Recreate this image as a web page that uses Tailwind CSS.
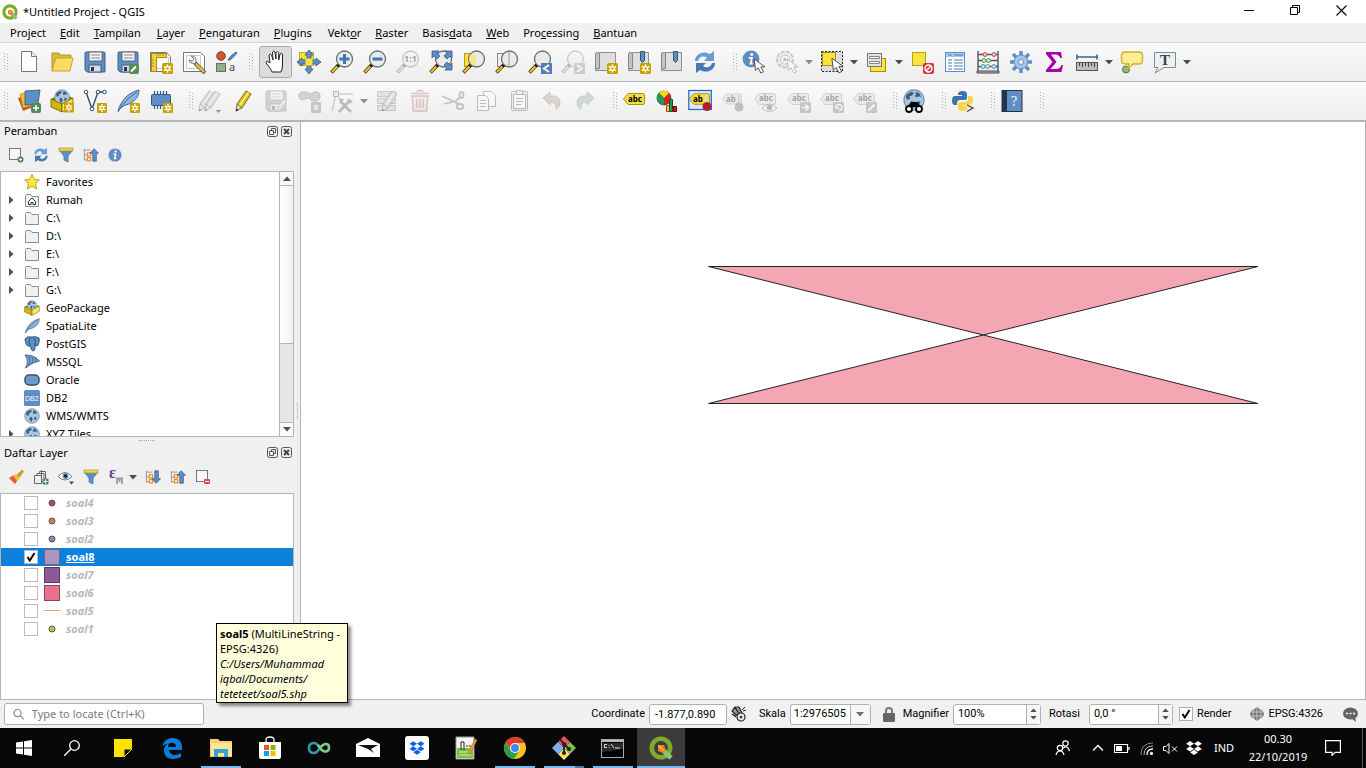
<!DOCTYPE html>
<html lang="id">
<head>
<meta charset="utf-8">
<title>*Untitled Project - QGIS</title>
<script src="https://cdn.jsdelivr.net/npm/@tailwindcss/browser@4"></script>
</head>
<body class="h-screen flex flex-col overflow-hidden bg-[#f0f0f0] text-black font-['Noto_Sans','Open_Sans',sans-serif] text-[12px] leading-[18px]">

<svg class="hidden" aria-hidden="true">
  <defs>
    <symbol id="grip" viewBox="0 0 4 18"><path d="M.5 0v18M3.500 1v17" stroke="#b0b0b0" stroke-width="1" stroke-dasharray="1 2" shape-rendering="crispEdges"/></symbol>
    <symbol id="caret" viewBox="0 0 8 5"><path d="M0 0h8L4 4.500z" fill="#4d4d4d"/></symbol>
    <symbol id="plusgold" viewBox="0 0 11 11"><rect width="11" height="11" rx="1.500" fill="#c9a000"/><path d="M5.500 1.200v8.600M1.800 3.300l7.400 4.400M9.200 3.300L1.800 7.700" stroke="#fff" stroke-width="1.400"/><circle cx="5.500" cy="5.500" r="2.500" fill="#fff"/><circle cx="5.500" cy="5.500" r="1.200" fill="#c9a000"/></symbol>
    <symbol id="lens" viewBox="0 0 24 24"><path d="M1.500 22.500l7-7.500" stroke="#3a3020" stroke-width="3.400"/><path d="M2 22l6-6.300" stroke="#f5c518" stroke-width="2"/><path d="M7.500 16.500l2-2" stroke="#111" stroke-width="3"/><circle cx="14.500" cy="9" r="8" fill="#e9ecec" stroke="#6e6e6e" stroke-width="1.300"/></symbol>
    <symbol id="arrow" viewBox="0 0 14 18"><path d="M1 1l1.500 13 3-3 3 6 3-1.500-3-5.500h4.500z" fill="#fff" stroke="#444" stroke-width="1"/></symbol>
    <symbol id="globe" viewBox="0 0 24 24"><circle cx="12" cy="12" r="11" fill="#a9c6e0" stroke="#7290ae" stroke-width="1.200"/><path d="M4 6l5-3 3 1-2 3-3 1 1 2-3 2-2-3zM14 3l4 2 2 4-3-1-2 1-2-1 1-2zM9 13l3 1 1 3-2 4-3-4zM16 13l3 1-1 4-3-1z" fill="#3d5b7a"/></symbol>
    <symbol id="refresh" viewBox="0 0 24 24"><path d="M2 11C2 4 10 0 17 4l4-3v10H11l3-3C10 5 6 7 5 11z" fill="#6a9bd2"/><path d="M22 13c0 7-8 11-15 7l-4 3V13h10l-3 3c4 3 8 1 9-3z" fill="#4478b8"/></symbol>
    <symbol id="funnel" viewBox="0 0 16 16"><path d="M1 3h14l-5 6v6l-4-2V9z" fill="#5f8fc4" stroke="#4a74a3" stroke-width=".8"/><rect x="1" y="1" width="14" height="3" fill="#e8d84a" stroke="#9e8d20" stroke-width=".6"/></symbol>
    <symbol id="folder" viewBox="0 0 14 13"><path d="M.5 2.500v-1q0-1 1-1h4l1.500 2h6.500v10H.5z" fill="#f0f0f0" stroke="#8c8c8c"/></symbol>
    <symbol id="tri" viewBox="0 0 5 8"><path d="M0 0l4.500 4L0 8z" fill="#4f4f4f"/></symbol>
    <symbol id="restore" viewBox="0 0 11 11"><rect x=".5" y=".5" width="10" height="10" rx="2" fill="none" stroke="#555"/><path d="M4.500 4.500v-2h4v4h-2M2.500 4.500h4v4h-4z" fill="none" stroke="#555"/></symbol>
    <symbol id="closebox" viewBox="0 0 11 11"><rect x=".5" y=".5" width="10" height="10" rx="2" fill="none" stroke="#555"/><path d="M3 3l5 5M8 3l-5 5" stroke="#444" stroke-width="2"/></symbol>
    <symbol id="info" viewBox="0 0 16 16"><circle cx="8" cy="8" r="7.500" fill="#5f8dc1"/><circle cx="8.700" cy="4" r="1.300" fill="#fff"/><path d="M6 7h2.800L7.600 12h1.900" fill="none" stroke="#fff" stroke-width="1.600"/></symbol>
    <symbol id="floppy" viewBox="0 0 24 24"><path d="M2 3q0-1 1-1h18q1 0 1 1v19H4l-2-2z" fill="#5f8ec4" stroke="#3f618c"/><rect x="6" y="2" width="13" height="9" fill="#f4f4f4" stroke="#667"/><path d="M8 5h9M8 8h9" stroke="#8a8a8a"/><rect x="6" y="15" width="12" height="7" fill="#d8dde3" stroke="#3f618c"/><rect x="8" y="17" width="3" height="4" fill="#333"/></symbol>
    <symbol id="book" viewBox="0 0 24 24"><path d="M5.500 2.500H21.500v18h-18V4z" fill="#dedede" stroke="#8f8f8f"/><path d="M5.500 18.500H3q-1.500 0-1.500 1.500t2 .5M1.500 20V4q0-1.500 2-1.500t2 1.500v14.500" fill="#c4c4c4" stroke="#858585"/></symbol>
    <symbol id="tag" viewBox="0 0 22 12"><path d="M5 .5h15q1.500 0 1.500 1.500v8q0 1.500-1.500 1.500H5L.5 6z" fill="#f2de3c" stroke="#a8951c"/></symbol>
    <symbol id="tree" viewBox="0 0 18 16"><path d="M1.500 1v13M1.500 2.500h7M1.500 8h3M1.500 13.500h3" stroke="#8c8c8c" fill="none"/><rect x="5" y="5.500" width="3.500" height="3.500" fill="#fff" stroke="#f28a1c" stroke-width="1.400"/><rect x="5" y="11" width="3.500" height="3.500" fill="#fff" stroke="#f28a1c" stroke-width="1.400"/></symbol>
    <symbol id="q" viewBox="0 0 24 24"><circle cx="12" cy="12" r="9.200" fill="none" stroke="#7eaa2c" stroke-width="4.600"/><path d="M14 14l8 8" stroke="#8cc27a" stroke-width="4.600"/><path d="M9 9h6l2 5-3 3-5-2z" fill="#ee7f2a"/><path d="M9.500 9.500l5 5" stroke="#f9c23c" stroke-width="1.500"/></symbol>
    <symbol id="dropbox" viewBox="0 0 18 16"><path d="M4.500 0L9 3 4.500 6 0 3zM13.500 0L18 3l-4.500 3L9 3zM4.500 6L9 9l-4.500 3L0 9zM13.500 6L18 9l-4.500 3L9 9zM9 10l4.500 3L9 16l-4.500-3z"/></symbol>
    <symbol id="tick" viewBox="0 0 10 10"><path d="M1.500 5l2.300 3.500L8.500 1" fill="none" stroke="#000" stroke-width="1.900"/></symbol>
    <symbol id="quill" viewBox="0 0 24 24"><path d="M2 22C5 12 11 4 23 1c0 7-5 13-13 15l-3 1z" fill="#8db4dc" stroke="#45678c"/><path d="M2 23C7 14 13 8 21 3" fill="none" stroke="#45678c"/></symbol>
    <symbol id="box" viewBox="0 0 24 24"><path d="M1 10l11 5v8L1 18z" fill="#d8b400" stroke="#6d5c00" stroke-width=".8"/><path d="M23 9l-11 6v8l11-6z" fill="#f7ea55" stroke="#6d5c00" stroke-width=".8"/></symbol>
    <symbol id="pencil" viewBox="0 0 24 24"><path d="M6 15L15 2l5 3-9 14z" fill="#e3c21f" stroke="#7d6b12"/><path d="M5 22l1-7 5 4z" fill="#e7d7b5" stroke="#555" stroke-width=".8"/><path d="M5 22.500l.4-3 2 1.500z" fill="#222"/><path d="M8.500 16.500L17.500 3.500" stroke="#fff07a" stroke-width="1.500"/></symbol>
  </defs>
</svg>

<header class="flex h-[23px] shrink-0 items-center bg-white pr-[2px] pl-[2px]">
  <svg class="size-4"><use href="#q"/></svg>
  <h1 class="ml-[5px] flex-1 text-[11px]">*Untitled Project - QGIS</h1>
  <button aria-label="Minimize" class="flex h-[21px] w-[46px] items-center justify-center self-start"><svg class="size-[11px]"><path d="M0 5.500h10" stroke="#000"/></svg></button>
  <button aria-label="Restore" class="flex h-[21px] w-[46px] items-center justify-center self-start"><svg class="size-[11px]" fill="none" stroke="#000"><path d="M2.500 2.500v-2h7v7h-2M.5 2.500h7v7h-7z"/></svg></button>
  <button aria-label="Close" class="flex h-[21px] w-[46px] items-center justify-center self-start"><svg class="size-[11px]"><path d="M.5.5l10 10M10.500.5l-10 10" stroke="#000" stroke-width="1.100"/></svg></button>
</header>

<nav class="flex h-5 shrink-0 items-center gap-[14px] border-b border-[#d4d4d4] pl-[10px] text-[11px]">
  <button>Pro<u>j</u>ect</button><button><u>E</u>dit</button><button><u>T</u>ampilan</button><button class="ml-[2px]"><u>L</u>ayer</button><button><u>P</u>engaturan</button><button><u>P</u>lugins</button><button class="ml-[2px]">Vekt<u>o</u>r</button><button><u>R</u>aster</button><button>Basis<u>d</u>ata</button><button><u>W</u>eb</button><button>Pro<u>c</u>essing</button><button><u>B</u>antuan</button>
</nav>

<div role="toolbar" class="flex h-[39px] shrink-0 items-center border-b border-[#b5b5b5] bg-linear-to-b from-[#fafafa] to-[#ededed] [&>button]:flex [&>button]:h-8 [&>button]:w-[33px] [&>button]:shrink-0 [&>button]:items-center [&>button]:justify-center [&>button>svg]:size-6">
  <span class="flex w-3 justify-center"><svg class="h-[18px] w-1"><use href="#grip"/></svg></span>
  <button aria-label="New"><svg viewBox="0 0 24 24"><path d="M4.500 1.500h10l5 5v15h-15z" fill="#fff" stroke="#777"/><path d="M14.500 1.500v5h5" fill="#eee" stroke="#777"/></svg></button>
  <button aria-label="Open"><svg viewBox="0 0 24 24"><path d="M2 21V3h7l1 2h11v4" fill="#d9b83c" stroke="#b99623"/><path d="M2 21L6 8h17l-3 13z" fill="#fbdc63" stroke="#c9a52d"/></svg></button>
  <button aria-label="Save"><svg><use href="#floppy"/></svg></button>
  <button aria-label="Save as"><svg viewBox="0 0 24 24"><use href="#floppy"/><rect x="13" y="14" width="10" height="10" rx="2" fill="#5b8a52"/><path d="M15 21.500l5-5" stroke="#fff" stroke-width="2"/></svg></button>
  <button aria-label="New layout"><svg viewBox="0 0 24 24"><path d="M1.500 2.500h16l4 4v15h-20z" fill="#fff" stroke="#777"/><path d="M6.500 7.500h13v11h-13z" fill="none" stroke="#b9cfe8"/><path d="M2.500 3.500h15v4h-10v14h-5z" fill="#f3d43f" stroke="#a58a15"/><path d="M8 4v2M11 4v2M14 4v2M3 10h2M3 13h2M3 16h2" stroke="#a58a15"/><use href="#plusgold" x="13" y="13" width="11" height="11"/></svg></button>
  <button aria-label="Layout manager"><svg viewBox="0 0 24 24"><path d="M1.500 2.500h17l4 4v15h-21z" fill="#fff" stroke="#777"/><path d="M4.500 5.500h14v13h-14z" fill="none" stroke="#b9cfe8"/><path d="M13 13l10 10" stroke="#7b6a27" stroke-width="4"/><path d="M14 14l8 8" stroke="#e4c85a" stroke-width="2"/><path d="M9 6q5 0 5 4 0 2-1 4l-3-1q-3 0-3-3l3 1 2-2z" fill="#eee" stroke="#777"/></svg></button>
  <button aria-label="Style manager"><svg viewBox="0 0 24 24"><circle cx="6" cy="6" r="4.300" fill="#cb5a33" stroke="#8d3a1c"/><path d="M13 10q1-3 8-8l1 1q-4 5-7 7z" fill="#5f8ec4" stroke="#41658f"/><rect x="1.500" y="13.500" width="9" height="8" fill="#8fb08c" stroke="#56795a"/><text x="14" y="21" font-size="11" fill="#444">a</text></svg></button>

  <span class="flex w-4 justify-center"><svg class="h-[18px] w-1"><use href="#grip"/></svg></span>
  <button aria-label="Pan" aria-pressed="true" class="rounded-[3px] border border-[#a9a9a9] bg-[#dcdcdc]"><svg viewBox="0 0 24 24"><path d="M8 22C7 18 2 14 2 12q1-2 4 1L5 5q1-2 2.500 0L9 10 8.500 2q1.200-2 2.500 0l1 7V2.500q1.500-2 2.700 0V10l1.300-6q1.700-1.500 2.500 0v12q0 3-1.500 6z" fill="#fff" stroke="#222"/></svg></button>
  <button aria-label="Pan to selection"><svg viewBox="0 0 24 24"><rect x="2.500" y="2.500" width="14" height="13" fill="#fbe03a" stroke="#c3a81c"/><path d="M12 0l4 5h-2v5h5V8l5 4-5 4v-2h-5v5h2l-4 5-4-5h2v-5H5v2l-5-4 5-4v2h5V5H8z" fill="#5f8ec4" stroke="#33557e" stroke-width=".8"/><rect x="8.500" y="8.500" width="7" height="7" fill="#fbe03a"/></svg></button>
  <button aria-label="Zoom in"><svg viewBox="0 0 24 24"><use href="#lens"/><path d="M14.500 4v10M9.500 9h10" stroke="#4274ad" stroke-width="3"/></svg></button>
  <button aria-label="Zoom out"><svg viewBox="0 0 24 24"><use href="#lens"/><path d="M9.500 9h10" stroke="#4274ad" stroke-width="3"/></svg></button>
  <button aria-label="Zoom native" class="opacity-35 grayscale"><svg viewBox="0 0 24 24"><use href="#lens"/><text x="8" y="12" font-size="9" font-weight="700">1:1</text></svg></button>
  <button aria-label="Zoom full"><svg viewBox="0 0 24 24"><use href="#lens"/><path d="M3 1h7L8 3l3 3-3 3-3-3-2 2zM23 1h-7l2 2-3 3 3 3 3-3 2 2zM23 20h-7l2-2-3-3 3-3 3 3 2-2z" fill="#5f8ec4" stroke="#33557e" stroke-width=".8"/></svg></button>
  <button aria-label="Zoom to selection"><svg viewBox="0 0 24 24"><rect x="2.500" y="3.500" width="12" height="13" fill="#fbe03a" stroke="#b59b17"/><use href="#lens"/><path d="M8 5h6v11q-6-1-7-7z" fill="#f3e88a"/></svg></button>
  <button aria-label="Zoom to layer"><svg viewBox="0 0 24 24"><rect x="2.500" y="3.500" width="12" height="13" fill="#eee" stroke="#888"/><use href="#lens"/><path d="M14 2v14" stroke="#999"/></svg></button>
  <button aria-label="Zoom last"><svg viewBox="0 0 24 24"><use href="#lens"/><rect x="13" y="13" width="11" height="11" fill="#4f7fb8"/><path d="M21 15l-5 3.500 5 3.500" fill="none" stroke="#fff" stroke-width="2"/></svg></button>
  <button aria-label="Zoom next" class="opacity-30 grayscale"><svg viewBox="0 0 24 24"><use href="#lens"/><rect x="13" y="13" width="11" height="11" fill="#777"/><path d="M16 15l5 3.500-5 3.500" fill="none" stroke="#fff" stroke-width="2"/></svg></button>
  <button aria-label="New map view"><svg viewBox="0 0 24 24"><use href="#book"/><use href="#plusgold" x="13" y="13" width="11" height="11"/></svg></button>
  <button aria-label="New bookmark"><svg viewBox="0 0 24 24"><use href="#book"/><path d="M13.500 1.500h4v9l-2 2-2-2z" fill="#5f8ec4" stroke="#33557e"/><use href="#plusgold" x="13" y="13" width="11" height="11"/></svg></button>
  <button aria-label="Show bookmarks"><svg viewBox="0 0 24 24"><use href="#book"/><path d="M13.500 1.500h4v9l-2 2-2-2z" fill="#5f8ec4" stroke="#33557e"/></svg></button>
  <button aria-label="Refresh"><svg viewBox="0 0 24 24"><use href="#refresh"/></svg></button>

  <span class="flex w-4 justify-end"><svg class="h-[18px] w-1"><use href="#grip"/></svg></span>
  <button aria-label="Identify"><svg viewBox="0 0 24 24"><use href="#info" width="18" height="18"/><use href="#arrow" x="11" y="8" width="13" height="16"/></svg></button>
  <button aria-label="Run action" class="opacity-35 grayscale"><svg viewBox="0 0 24 24"><circle cx="10" cy="9.500" r="8" fill="#ddd" stroke="#777" stroke-width="2" stroke-dasharray="4 1.500"/><circle cx="10" cy="9.500" r="4.500" fill="#fff" stroke="#666"/><path d="M8.500 7l4 2.500-4 2.500z" fill="#555"/><use href="#arrow" x="11" y="8" width="13" height="16"/></svg></button>
  <span class="flex w-3 justify-center opacity-60"><svg class="h-[5px] w-2"><use href="#caret"/></svg></span>
  <button aria-label="Select features"><svg viewBox="0 0 24 24"><rect x="1.500" y="1.500" width="21" height="20" fill="#ddd" stroke="#222" stroke-dasharray="2 1.500"/><rect x="2.500" y="2.500" width="13" height="13" fill="#fbe33f" stroke="#a78f12"/><use href="#arrow" x="11" y="7" width="13" height="17"/></svg></button>
  <span class="flex w-3 justify-center"><svg class="h-[5px] w-2"><use href="#caret"/></svg></span>
  <button aria-label="Select by value"><svg viewBox="0 0 24 24"><rect x="5.500" y="8.500" width="15" height="13" fill="#fbe33f" stroke="#a78f12"/><rect x="2.500" y="3.500" width="14" height="13" fill="#dde4ea" stroke="#777"/><path d="M4.500 6.500h10v2h-10zM4.500 11.500h10v2h-10z" fill="#fff" stroke="#888"/></svg></button>
  <span class="flex w-3 justify-center"><svg class="h-[5px] w-2"><use href="#caret"/></svg></span>
  <button aria-label="Deselect"><svg viewBox="0 0 24 24"><rect x="2.500" y="2.500" width="13" height="13" fill="#fbe33f" stroke="#b9a01a"/><rect x="13" y="13" width="11" height="11" rx="2" fill="#d8353c"/><circle cx="18.500" cy="18.500" r="3.500" fill="none" stroke="#fff" stroke-width="1.400"/><path d="M16 21l5-5" stroke="#fff" stroke-width="1.400"/></svg></button>
  <button aria-label="Attribute table"><svg viewBox="0 0 24 24"><rect x="2.500" y="2.500" width="19" height="19" fill="#fff" stroke="#5f8ec4"/><path d="M3 3h18v4H3z" fill="#a9cbe8"/><path d="M5 5h4M11 5h9M5 10h4M11 10h9M5 13h4M11 13h9M5 16h4M11 16h9M5 19h4M11 19h9" stroke="#4c7db3"/></svg></button>
  <button aria-label="Field calculator"><svg viewBox="0 0 24 24"><path d="M2 1v21M22 1v21M2 4.500h20M2 10.500h20M2 16.500h20" stroke="#555" stroke-width="1.400"/><path d="M1 21h22v2H1z" fill="#bbb" stroke="#444"/><g fill="#f4c4c4" stroke="#c8464a"><circle cx="9" cy="4.500" r="2"/><circle cx="18" cy="4.500" r="2"/></g><g fill="#cfe8cf" stroke="#4f9a52"><circle cx="8" cy="10.500" r="2"/><circle cx="12.500" cy="10.500" r="2"/></g><g fill="#cfe2f0" stroke="#5590b8"><circle cx="7" cy="16.500" r="2"/><circle cx="11.500" cy="16.500" r="2"/><circle cx="18" cy="16.500" r="2"/></g></svg></button>
  <button aria-label="Processing toolbox"><svg viewBox="0 0 24 24"><path d="M12 1v22M1 12h22M4 4l16 16M20 4L4 20" stroke="#5f8ec4" stroke-width="3.500"/><circle cx="12" cy="12" r="7" fill="#a3c3e8" stroke="#5f8ec4"/><circle cx="12" cy="12" r="2.500" fill="#f4f4f4" stroke="#5f8ec4"/></svg></button>
  <button aria-label="Statistical summary"><svg viewBox="0 0 24 24"><path d="M4 2h15l1 6h-1.500q-1-3-4-3.500H9L14.500 12 8.500 19H15q3.500-.5 4.500-4H21l-1.500 7H4v-2l6.500-8L4 4z" fill="#a800a8"/></svg></button>
  <button aria-label="Measure"><svg viewBox="0 0 24 24"><path d="M2 7h20M2 4.500v5M22 4.500v5" stroke="#41658f" stroke-width="1.600"/><rect x="1.500" y="12.500" width="21" height="8" fill="#bdbdbd" stroke="#555"/><path d="M4.500 13v3M7.500 13v4M10.500 13v3M13.500 13v4M16.500 13v3M19.500 13v4" stroke="#444"/></svg></button>
  <span class="flex w-3 justify-center"><svg class="h-[5px] w-2"><use href="#caret"/></svg></span>
  <button aria-label="Map tips"><svg viewBox="0 0 24 24"><circle cx="6" cy="19.500" r="3.500" fill="#8cb78a" stroke="#4c7a4d"/><path d="M5 2h14q3.500 0 3.500 3.500v5q0 3.500-3.500 3.500h-6l-6 5.500L9 14H5q-3.500 0-3.500-3.500v-5Q1.500 2 5 2z" fill="#fbee94" stroke="#cdae1f" stroke-width="1.300"/></svg></button>
  <button aria-label="Text annotation"><svg viewBox="0 0 24 24"><path d="M1.500 2.500h21v15H11l-9 5.500 3-5.500H1.500z" fill="#e9f0f6" stroke="#888"/><text x="7" y="15" font-size="15" font-weight="700" font-family="Liberation Serif" fill="#444">T</text></svg></button>
  <span class="flex w-3 justify-center"><svg class="h-[5px] w-2"><use href="#caret"/></svg></span>
</div>

<div role="toolbar" class="flex h-[39px] shrink-0 items-center border-b border-[#b5b5b5] bg-linear-to-b from-[#fafafa] to-[#ededed] [&>button]:flex [&>button]:h-8 [&>button]:w-[33px] [&>button]:shrink-0 [&>button]:items-center [&>button]:justify-center [&>button>svg]:size-6">
  <span class="flex w-3 justify-center"><svg class="h-[18px] w-1"><use href="#grip"/></svg></span>
  <button aria-label="Data source manager"><svg viewBox="0 0 24 24"><path d="M1 9l12-4 3 13-10 4z" fill="#c9562c"/><path d="M3 5l12-3 2 14-11 3z" fill="#edbf2f" stroke="#a8801c" stroke-width=".6"/><path d="M8 2l15-1-2 14-13 1z" fill="#5f8ec4" stroke="#33557e" stroke-width=".8"/><rect x="14" y="14" width="10" height="10" rx="2" fill="#4f8a58"/><path d="M19 16v6M16 19h6" stroke="#fff" stroke-width="1.500"/></svg></button>
  <button aria-label="New GeoPackage"><svg viewBox="0 0 24 24"><path d="M1 10l11-6 11 5-11 6z" fill="#8a7400"/><use href="#globe" x="4" y="0" width="16" height="16"/><use href="#box"/><use href="#plusgold" x="14" y="13" width="10" height="11"/></svg></button>
  <button aria-label="New shapefile"><svg viewBox="0 0 24 24"><path d="M3 3l6 17 6-17h6" fill="none" stroke="#33506e" stroke-width="1.400"/><g fill="#fff" stroke="#33506e"><circle cx="3" cy="3" r="1.800"/><circle cx="9" cy="20" r="1.800"/><circle cx="15" cy="3" r="1.800"/><circle cx="21.500" cy="3" r="1.800"/></g><use href="#plusgold" x="14" y="14" width="10" height="10"/></svg></button>
  <button aria-label="New SpatiaLite"><svg viewBox="0 0 24 24"><use href="#quill"/><use href="#plusgold" x="14" y="14" width="10" height="10"/></svg></button>
  <button aria-label="New scratch layer"><svg viewBox="0 0 24 24"><path d="M5.500 2v18M8.500 2v18M11.500 2v18M14.500 2v18M17.500 2v18" stroke="#33557e" stroke-width="1.200"/><rect x="2.500" y="5.500" width="19" height="11" rx="1" fill="#5f8ec4" stroke="#33557e"/><use href="#plusgold" x="14" y="14" width="10" height="10"/></svg></button>

  <span class="flex w-4 justify-end"><svg class="h-[18px] w-1"><use href="#grip"/></svg></span>
  <button aria-label="Current edits" class="opacity-40 grayscale"><svg viewBox="0 0 24 24"><use href="#pencil" x="-4" width="24" height="24"/><use href="#pencil" x="2" width="24" height="24"/><path d="M18 21h5l-2.500 3z"/></svg></button>
  <button aria-label="Toggle editing"><svg viewBox="0 0 24 24"><use href="#pencil"/></svg></button>
  <button aria-label="Save edits" class="opacity-30 grayscale"><svg viewBox="0 0 24 24"><use href="#floppy"/><use href="#pencil" x="10" y="9" width="15" height="15"/></svg></button>
  <button aria-label="Add feature" class="opacity-35 grayscale"><svg viewBox="0 0 24 24"><path d="M2 8q-1-4 3-5 3-1 6 1t6-1q6-1 6 4t-5 5-5-2-5 0-6-2z" fill="#999" stroke="#555"/><rect x="14" y="13" width="10" height="11" rx="1" fill="#777"/><path d="M19 15v7M16 16.500l6 4M22 16.500l-6 4" stroke="#fff"/></svg></button>
  <button aria-label="Vertex tool" class="opacity-35 grayscale"><svg viewBox="0 0 24 24"><path d="M2 22L6 5h17" fill="none" stroke="#555"/><rect x="3.500" y="2.500" width="5" height="5" fill="#ddd" stroke="#444"/><path d="M9 23L20 11M10 12l11 11" stroke="#555" stroke-width="2.600"/><path d="M8 9l6 1-3 5zM17 9l6 3-3 3z" fill="#555"/></svg></button>
  <span class="flex w-3 justify-center opacity-60"><svg class="h-[5px] w-2"><use href="#caret"/></svg></span>
  <button aria-label="Modify attributes" class="opacity-40"><svg viewBox="0 0 24 24"><path d="M2.500 2.500h18v5h-18zM2.500 9.500h18v5h-18zM2.500 16.500h18v5h-18z" fill="#ccccaa" stroke="#888"/><use href="#pencil" x="2" width="24" height="24" class="grayscale"/></svg></button>
  <button aria-label="Delete selected" class="opacity-35"><svg viewBox="0 0 24 24"><path d="M4 7h16l-1.500 15h-13z" fill="#e8d8d8" stroke="#97686a" stroke-width="1.400"/><path d="M3 4.500h18M9 3q0-1.500 3-1.500t3 1.500M8.500 10l.5 9M12 10v9M15.500 10l-.5 9" fill="none" stroke="#97686a" stroke-width="1.500"/></svg></button>
  <button aria-label="Cut" class="opacity-35"><svg viewBox="0 0 24 24" fill="none" stroke="#666" stroke-width="1.800"><path d="M1 7l17 8M3 15l12-3 4-4"/><ellipse cx="20.500" cy="6" rx="2" ry="3"/><ellipse cx="19" cy="17.500" rx="3.200" ry="2.500"/></svg></button>
  <button aria-label="Copy" class="opacity-35"><svg viewBox="0 0 24 24" fill="#fff" stroke="#555"><path d="M9.500 2.500h8l4 4v11h-12z"/><path d="M3.500 6.500h8l3 3v12h-11zM6 11.500h6M6 14.500h6M6 17.500h6"/></svg></button>
  <button aria-label="Paste" class="opacity-35"><svg viewBox="0 0 24 24" fill="#ddd" stroke="#555"><rect x="4.500" y="2.500" width="16" height="19" rx="1"/><path d="M6.500 5.500h12v14h-12z" fill="#fff"/><path d="M9.500 1.500h6v4h-6zM9 9.500h7M9 12.500h7M9 15.500h5"/></svg></button>
  <button aria-label="Undo" class="opacity-35"><svg viewBox="0 0 24 24"><path d="M3 9l7-6v4q10-1 10 7 0 4-4 6 1-7-6-7v3z" fill="#a99a8a" stroke="#807468"/></svg></button>
  <button aria-label="Redo" class="opacity-35"><svg viewBox="0 0 24 24"><path d="M21 9l-7-6v4Q4 6 4 14q0 4 4 6-1-7 6-7v3z" fill="#94a696" stroke="#6f8071"/></svg></button>

  <span class="flex w-4 justify-end"><svg class="h-[18px] w-1"><use href="#grip"/></svg></span>
  <button aria-label="Labels"><svg viewBox="0 0 24 24"><use href="#tag" x="1" y="4" width="22" height="12"/><text x="6" y="13" font-size="8" font-weight="700">abc</text></svg></button>
  <button aria-label="Diagrams"><svg viewBox="0 0 24 24"><circle cx="9" cy="9" r="7" fill="#e02020" stroke="#222" stroke-width=".6"/><path d="M9 9L4 4q5-5 10 0z" fill="#f7d817"/><path d="M9 9L4 4q-5 5 1 10 2 2 4 2z" fill="#14a050"/><path d="M11.500 16.500h3v6h-3z" fill="#f7d817" stroke="#b33"/><path d="M14.500 10.500h3v12h-3z" fill="#14a050" stroke="#0a5a2c"/><path d="M18 17.500h3.500v5H18z" fill="#c01818" stroke="#700"/></svg></button>
  <button aria-label="Highlight pinned labels"><svg viewBox="0 0 24 24"><rect x=".8" y="1.500" width="22.500" height="19" fill="#e4e9ee" stroke="#1467d8" stroke-width="1.200"/><use href="#tag" x="1" y="4" width="21" height="12"/><text x="5" y="13" font-size="8" font-weight="700">ab</text><path d="M18 6v12" stroke="#ddd" stroke-width="2"/><circle cx="19" cy="17.500" r="4.500" fill="#b32025"/></svg></button>
  <button aria-label="Pin labels" class="opacity-35 grayscale"><svg viewBox="0 0 24 24"><use href="#tag" x="1" y="4" width="20" height="12"/><text x="5" y="13" font-size="8" font-weight="700">ab</text><path d="M18 6v12" stroke="#999" stroke-width="2"/><circle cx="18" cy="18" r="4.500" fill="#955"/></svg></button>
  <button aria-label="Show labels" class="opacity-35 grayscale"><svg viewBox="0 0 24 24"><use href="#tag" x="0" y="4" width="22" height="12"/><text x="5" y="12" font-size="8" font-weight="700">abc</text><path d="M8 19q7-8 15 0-8 7-15 0z" fill="#fff" stroke="#555"/><circle cx="15.500" cy="18.500" r="2.800" fill="#357"/></svg></button>
  <button aria-label="Move label" class="opacity-35 grayscale"><svg viewBox="0 0 24 24"><use href="#tag" x="0" y="4" width="22" height="12"/><text x="5" y="12" font-size="8" font-weight="700">abc</text><rect x="13" y="13" width="11" height="11" rx="1" fill="#777"/><path d="M15 18.500h6M18.500 15.500l3 3-3 3" fill="none" stroke="#fff" stroke-width="1.600"/></svg></button>
  <button aria-label="Rotate label" class="opacity-35 grayscale"><svg viewBox="0 0 24 24"><use href="#tag" x="0" y="4" width="22" height="12"/><text x="5" y="12" font-size="8" font-weight="700">abc</text><rect x="13" y="13" width="11" height="11" rx="1" fill="#777"/><path d="M16 19a3 3 0 1 1 3 2.500M16 16v3h3" fill="none" stroke="#fff" stroke-width="1.400"/></svg></button>
  <button aria-label="Change label" class="opacity-35 grayscale"><svg viewBox="0 0 24 24"><use href="#tag" x="0" y="4" width="22" height="12"/><text x="5" y="12" font-size="8" font-weight="700">abc</text><rect x="13" y="13" width="11" height="11" rx="1" fill="#777"/><path d="M15.500 21.500l6-6" stroke="#fff" stroke-width="2"/></svg></button>

  <span class="flex w-4 justify-end"><svg class="h-[18px] w-1"><use href="#grip"/></svg></span>
  <button aria-label="MetaSearch"><svg viewBox="0 0 24 24"><use href="#globe" x="0" y="0" width="24" height="22"/><path d="M5 18l4-5h6l4 5z" fill="#000"/><circle cx="7" cy="20" r="3" fill="#fff" stroke="#000" stroke-width="1.800"/><circle cx="17" cy="20" r="3" fill="#fff" stroke="#000" stroke-width="1.800"/></svg></button>
  <span class="flex w-4 justify-end"><svg class="h-[18px] w-1"><use href="#grip"/></svg></span>
  <button aria-label="Python console"><svg viewBox="0 0 24 24"><path d="M7 5q0-3 4.500-3T16 5v4q0 2-2 2H9q-3 0-3 3v2H4q-3 0-3-4.500T4 7h7V6H7z" fill="#3a74a8"/><path d="M17 7h2q3 0 3 4t-3 5h-7v1h4v2q0 3-4.500 3T7 19v-4q0-2 2-2h5q3 0 3-3z" fill="#fbd447"/><path d="M16 16l6 3-6 3.500" fill="none" stroke="#444" stroke-width="1.300"/></svg></button>
  <span class="flex w-4 justify-end"><svg class="h-[18px] w-1"><use href="#grip"/></svg></span>
  <button aria-label="Help"><svg viewBox="0 0 24 24"><rect x="2" y="1.500" width="20" height="21" fill="#5f8ec4" stroke="#22344c"/><path d="M2 1.500h5v21H2z" fill="#22344c"/><text x="11" y="17" font-size="14" font-family="Liberation Serif" fill="#fff">?</text></svg></button>
  <span class="flex w-4 justify-end"><svg class="h-[18px] w-1"><use href="#grip"/></svg></span>
</div>

<main class="flex min-h-0 flex-1">
  <aside class="flex w-[294px] shrink-0 flex-col border-t border-[#b5b5b5]">
    <section class="flex h-[315px] shrink-0 flex-col">
      <div class="flex h-[18px] items-center gap-[3px] pr-[2px] pl-1">
        <h2 class="flex-1 text-[11px]">Peramban</h2>
        <button aria-label="Float"><svg class="size-[11px]"><use href="#restore"/></svg></button><button aria-label="Close panel"><svg class="size-[11px]"><use href="#closebox"/></svg></button>
      </div>
      <div role="toolbar" class="flex h-[30px] items-center gap-[9px] pl-2">
        <button aria-label="Add layers"><svg class="size-4" viewBox="0 0 16 16"><rect x="1.500" y="1.500" width="11" height="11" fill="#f6f6f6" stroke="#777"/><circle cx="12.500" cy="12.500" r="3" fill="#4f8a58"/><path d="M12.500 11v3M11 12.500h3" stroke="#fff"/></svg></button>
        <button aria-label="Refresh"><svg class="size-4"><use href="#refresh"/></svg></button>
        <button aria-label="Filter"><svg class="size-4"><use href="#funnel"/></svg></button>
        <button aria-label="Collapse all"><svg class="size-4" viewBox="0 0 18 16"><use href="#tree" width="18" height="16"/><path d="M12.500 1l5 5H15v9h-4V6H8z" fill="#5f8ec4" stroke="#33557e" stroke-width=".8"/></svg></button>
        <button aria-label="Properties"><svg class="size-[14px]"><use href="#info"/></svg></button>
      </div>
      <div class="mt-px flex min-h-0 flex-1 border border-[#b5b5b5] bg-white">
        <ul class="flex-1 overflow-hidden pt-px pl-2 text-[11px] [&>li]:flex [&>li]:h-[18px] [&>li]:items-center [&>li>svg]:shrink-0">
          <li><svg class="mr-[6px] ml-[15px] size-4" viewBox="0 0 16 16"><path d="M8 .5l2.200 5 5.300.5-4 3.500 1.200 5.500L8 12.200 3.300 15l1.200-5.500-4-3.500L5.800 5.500z" fill="#fbe847" stroke="#c4a21a"/></svg>Favorites</li>
          <li><svg class="mr-[11px] h-2 w-[5px]"><use href="#tri"/></svg><svg class="mr-[7px] h-[13px] w-[14px]" viewBox="0 0 14 13"><use href="#folder"/><path d="M3.500 7.500L7 4l3.500 3.500v3h-2.500v-2H6v2H3.500z" fill="#fff" stroke="#333"/></svg>Rumah</li>
          <li><svg class="mr-[11px] h-2 w-[5px]"><use href="#tri"/></svg><svg class="mr-[7px] h-[13px] w-[14px]"><use href="#folder"/></svg>C:\</li>
          <li><svg class="mr-[11px] h-2 w-[5px]"><use href="#tri"/></svg><svg class="mr-[7px] h-[13px] w-[14px]"><use href="#folder"/></svg>D:\</li>
          <li><svg class="mr-[11px] h-2 w-[5px]"><use href="#tri"/></svg><svg class="mr-[7px] h-[13px] w-[14px]"><use href="#folder"/></svg>E:\</li>
          <li><svg class="mr-[11px] h-2 w-[5px]"><use href="#tri"/></svg><svg class="mr-[7px] h-[13px] w-[14px]"><use href="#folder"/></svg>F:\</li>
          <li><svg class="mr-[11px] h-2 w-[5px]"><use href="#tri"/></svg><svg class="mr-[7px] h-[13px] w-[14px]"><use href="#folder"/></svg>G:\</li>
          <li><svg class="mr-[6px] ml-[15px] size-4" viewBox="0 0 24 24"><path d="M1 10l11-6 11 5-11 6z" fill="#8a7400"/><use href="#globe" x="4" y="0" width="16" height="16"/><use href="#box"/></svg>GeoPackage</li>
          <li><svg class="mr-[6px] ml-[15px] size-4"><use href="#quill"/></svg>SpatiaLite</li>
          <li><svg class="mr-[6px] ml-[15px] size-4" viewBox="0 0 16 16"><path d="M1 3q2-3 6-2 5-1 8 1 1 3-1 7l-2 1-1-1v3q0 3-2 3t-2-4l-2-1q-3 1-4-7z" fill="#5f8ec4" stroke="#33557e"/><path d="M6 2q-2 4 0 8M10 2q2 4 1 8" fill="none" stroke="#33557e"/></svg>PostGIS</li>
          <li><svg class="mr-[6px] ml-[15px] size-4" viewBox="0 0 16 16"><path d="M1 1q10 0 14.500 6-7 1-14 7 4-7-.5-13z" fill="#7ba3cf" stroke="#45678c"/><path d="M4 1.500q3.500 4 .5 10M7.500 2.500q3 3 .5 7M11 4q2 2 .5 4" fill="none" stroke="#45678c"/></svg>MSSQL</li>
          <li><svg class="mr-[6px] ml-[15px] size-4" viewBox="0 0 16 16"><rect x="1" y="3" width="14" height="10" rx="4" fill="#6e98cb" stroke="#33506e" stroke-width="1.500"/></svg>Oracle</li>
          <li><svg class="mr-[6px] ml-[15px] size-4" viewBox="0 0 16 16"><rect width="16" height="16" rx="1.500" fill="#5f8ec4"/><text x="1" y="10.500" font-size="7" font-family="Liberation Sans" fill="#fff">DB2</text></svg>DB2</li>
          <li><svg class="mr-[6px] ml-[15px] size-4"><use href="#globe"/></svg>WMS/WMTS</li>
          <li><svg class="mr-[11px] h-2 w-[5px]"><use href="#tri"/></svg><svg class="mr-[6px] -ml-px size-4"><use href="#globe"/></svg>XYZ Tiles</li>
        </ul>
        <div class="flex w-[14px] flex-col border-l border-[#b5b5b5] bg-[#e6e6e6]">
          <button aria-label="Scroll up" class="flex h-[14px] items-center justify-center border-b border-[#b5b5b5] bg-[#fafafa]"><svg class="h-[5px] w-2 rotate-180"><use href="#caret"/></svg></button>
          <div class="h-[158px] border-b border-[#b5b5b5] bg-linear-to-r from-white to-[#f2f2f2]"></div>
          <button aria-label="Scroll down" class="mt-auto flex h-[14px] items-center justify-center border-t border-[#b5b5b5] bg-[#fafafa]"><svg class="h-[5px] w-2"><use href="#caret"/></svg></button>
        </div>
      </div>
    </section>
    <div class="flex h-[6px] shrink-0 items-center justify-center"><i class="w-4 border-t border-dotted border-[#a5a5a5]"></i></div>
    <section class="flex min-h-0 flex-1 flex-col">
      <div class="flex h-[19px] shrink-0 items-center gap-[3px] pr-[2px] pl-1">
        <h2 class="flex-1 text-[11px]">Daftar Layer</h2>
        <button aria-label="Float"><svg class="size-[11px]"><use href="#restore"/></svg></button><button aria-label="Close panel"><svg class="size-[11px]"><use href="#closebox"/></svg></button>
      </div>
      <div role="toolbar" class="flex h-[30px] shrink-0 items-center gap-[9px] pl-2">
        <button aria-label="Styling"><svg class="size-4" viewBox="0 0 16 16"><path d="M9 6l5-5 1.500 1.500L11.500 8z" fill="#d9a516" stroke="#8b6508" stroke-width=".5"/><path d="M1 9l7-4 4 4-5 6z" fill="#f0c030"/><path d="M1 9l4-2.500L9 12l-2 3z" fill="#e65a4b"/></svg></button>
        <button aria-label="Add group"><svg class="size-4" viewBox="0 0 16 16"><path d="M1.500 6.500h7v8h-7zM4 6V4.500h7v8H9M6.500 4V2.500h6v8H11M8.500 1v9" fill="none" stroke="#666"/><rect x="9.500" y="9.500" width="6" height="6" rx="1" fill="#4f8a58"/><path d="M12.500 10.500v4M10.500 12.500h4" stroke="#fff"/></svg></button>
        <button aria-label="Manage visibility"><svg class="size-4" viewBox="0 0 16 16"><path d="M0 7.500q7-8 14 0-7 7-14 0z" fill="#fff" stroke="#777"/><circle cx="7.500" cy="7" r="3" fill="#5f8ec4"/><circle cx="7.500" cy="7" r="1.400"/><path d="M11 12.500h5l-2.500 3z" fill="#444"/></svg></button>
        <button aria-label="Filter legend"><svg class="size-4"><use href="#funnel"/></svg></button>
        <button aria-label="Filter by expression" class="-mr-px flex items-center gap-[5px]"><svg class="size-4 overflow-visible" viewBox="0 0 16 16"><text x="1" y="9" font-size="16" font-weight="700" font-family="Liberation Serif" fill="#63408c">ε</text><path d="M9 15v-5.500h5V15M11.500 10v3" fill="none" stroke="#999" stroke-width="1.800"/></svg><svg class="h-[5px] w-2"><use href="#caret"/></svg></button>
        <button aria-label="Expand all"><svg class="size-4" viewBox="0 0 18 16"><use href="#tree" width="18" height="16"/><path d="M12.500 15l5-5H15V1h-4v9H8z" fill="#5f8ec4" stroke="#33557e" stroke-width=".8"/></svg></button>
        <button aria-label="Collapse all"><svg class="size-4" viewBox="0 0 18 16"><use href="#tree" width="18" height="16"/><path d="M12.500 1l5 5H15v9h-4V6H8z" fill="#5f8ec4" stroke="#33557e" stroke-width=".8"/></svg></button>
        <button aria-label="Remove layer"><svg class="size-4" viewBox="0 0 16 16"><rect x="1.500" y="1.500" width="11" height="11" fill="#f6f6f6" stroke="#777"/><rect x="9" y="10" width="6" height="5" rx="1" fill="#dc4a4e"/><path d="M10 12.500h4" stroke="#fff"/></svg></button>
      </div>
      <ul class="mt-px min-h-0 flex-1 border border-[#b5b5b5] bg-white text-[11px] font-bold text-[#b8b8b8] italic [&_input]:size-[14px] [&_input]:appearance-none [&_input]:border [&_input]:border-[#bcbcbc] [&_input]:bg-white [&_label]:flex [&_label]:h-full [&_label]:items-center [&_svg]:mx-[6px] [&_svg]:size-4 [&>li]:h-[18px] [&>li]:pl-[23px]">
        <li><label><input type="checkbox"><svg viewBox="0 0 16 16"><circle cx="8" cy="8" r="3" fill="#b7484b" stroke="#555"/></svg>soal4</label></li>
        <li><label><input type="checkbox"><svg viewBox="0 0 16 16"><circle cx="8" cy="8" r="3" fill="#e77148" stroke="#555"/></svg>soal3</label></li>
        <li><label><input type="checkbox"><svg viewBox="0 0 16 16"><circle cx="8" cy="8" r="3" fill="#987db7" stroke="#555"/></svg>soal2</label></li>
        <li class="bg-[#0d80dc] text-white not-italic"><label><span class="grid"><input type="checkbox" checked class="col-start-1 row-start-1"><svg class="pointer-events-none col-start-1 row-start-1 m-[2px]! size-[10px]!"><use href="#tick"/></svg></span><svg viewBox="0 0 16 16"><rect x=".5" y=".5" width="15" height="15" fill="#a896bd" stroke="#6f6485"/></svg><u>soal8</u></label></li>
        <li><label><input type="checkbox"><svg viewBox="0 0 16 16"><rect x=".5" y=".5" width="15" height="15" fill="#8d5a99" stroke="#553a60"/></svg>soal7</label></li>
        <li><label><input type="checkbox"><svg viewBox="0 0 16 16"><rect x=".5" y=".5" width="15" height="15" fill="#e8718d" stroke="#8a4556"/></svg>soal6</label></li>
        <li><label><input type="checkbox"><svg viewBox="0 0 16 16"><path d="M0 7.500h16" stroke="#f3a64a"/></svg>soal5</label></li>
        <li><label><input type="checkbox"><svg viewBox="0 0 16 16"><circle cx="8" cy="8" r="3" fill="#b0c843" stroke="#555"/></svg>soal1</label></li>
      </ul>
    </section>
  </aside>
  <div class="flex w-[6px] shrink-0 items-center justify-center border-t border-[#b5b5b5]"><i class="h-4 border-l border-dotted border-[#a5a5a5]"></i></div>
  <section aria-label="Map" class="min-w-0 flex-1 border border-[#b5b5b5] bg-white">
    <svg class="size-full"><path d="M407.500 144.500h549.500L407.500 281.500h549.500z" fill="#f4a6b2" stroke="#232323"/></svg>
  </section>
</main>

<footer class="flex h-[28px] shrink-0 items-center pr-2 pl-1 text-[11px]">
  <label class="flex h-[22px] w-[200px] items-center rounded-[3px] border border-[#b0b0b0] bg-white pl-2"><svg class="mr-2 size-3" viewBox="0 0 12 12" fill="none" stroke="#888" stroke-width="1.300"><circle cx="5" cy="5" r="4"/><path d="M8 8l4 4"/></svg><input aria-label="Locate" placeholder="Type to locate (Ctrl+K)" class="w-full outline-none placeholder:text-[#7c7c7c]"></label>
  <div class="ml-auto flex items-center font-['Roboto','Noto_Sans',sans-serif]">
    <label class="flex items-center gap-1">Coordinate<input value="-1.877,0.890" class="h-[21px] w-[78px] rounded-[3px] border border-[#b0b0b0] bg-white pl-[5px]"></label>
    <button aria-label="Toggle extents" class="ml-1"><svg class="size-4" viewBox="0 0 16 16"><path d="M1 5l3-4 4 7-3 1zM5 1l3 0 3 6-3 2M1 8l4 3" fill="#999" stroke="#222" stroke-width="1.200"/><circle cx="10" cy="11" r="4" fill="#eee" stroke="#222" stroke-width="1.200"/><circle cx="10" cy="11" r="1.500" fill="#444"/><path d="M11 4l3-3M12 5l3-1" stroke="#222"/></svg></button>
    <label class="ml-3 flex items-center gap-1">Skala<span class="grid h-[21px] w-[81px] grid-cols-[1fr_20px] items-center rounded-[3px] border border-[#b0b0b0] bg-white"><select class="col-span-2 col-start-1 row-start-1 appearance-none pl-[3px]"><option>1:2976505</option></select><span class="pointer-events-none col-start-2 row-start-1 flex h-[19px] items-center justify-center border-l border-[#b0b0b0] bg-[#f6f6f6]"><svg class="h-[5px] w-2 opacity-80"><use href="#caret"/></svg></span></span></label>
    <button aria-label="Lock scale" class="ml-3"><svg class="h-[15px] w-3" viewBox="0 0 12 15"><path d="M3 7V4q0-3 3-3t3 3v3" fill="none" stroke="#777" stroke-width="2"/><rect y="6" width="12" height="9" rx="1" fill="#666"/></svg></button>
    <label class="ml-2 flex items-center gap-1">Magnifier<span class="flex h-[21px] w-[88px] items-center rounded-[3px] border border-[#b0b0b0] bg-white"><input value="100%" class="min-w-0 flex-1 pl-1"><span class="flex h-full w-[14px] flex-col items-center justify-center gap-1 border-l border-[#b0b0b0] bg-[#f6f6f6]"><svg class="h-1 w-[7px] rotate-180"><use href="#caret"/></svg><svg class="h-1 w-[7px]"><use href="#caret"/></svg></span></span></label>
    <label class="ml-2 flex items-center gap-[9px]">Rotasi<span class="flex h-[21px] w-[84px] items-center rounded-[3px] border border-[#b0b0b0] bg-white"><input value="0,0 °" class="min-w-0 flex-1 pl-1"><span class="flex h-full w-[14px] flex-col items-center justify-center gap-1 border-l border-[#b0b0b0] bg-[#f6f6f6]"><svg class="h-1 w-[7px] rotate-180"><use href="#caret"/></svg><svg class="h-1 w-[7px]"><use href="#caret"/></svg></span></span></label>
    <label class="ml-[6px] flex items-center gap-1"><span class="grid"><input type="checkbox" checked class="col-start-1 row-start-1 size-[14px] appearance-none border border-[#b0b0b0] bg-white"><svg class="pointer-events-none col-start-1 row-start-1 m-[2px] size-[10px]"><use href="#tick"/></svg></span>Render</label>
    <button class="ml-[19px] flex items-center gap-1"><svg class="size-[14px]" viewBox="0 0 14 14"><ellipse cx="7" cy="7" rx="7" ry="5" fill="#777"/><path d="M3 3l4-3 4 3v8l-4 3-4-3z" fill="#777"/><path d="M0 5h14M0 9h14M7 0v14M4 2q-2 5 0 10M10 2q2 5 0 10" fill="none" stroke="#ddd" stroke-width=".7"/></svg>EPSG:4326</button>
    <button aria-label="Messages" class="ml-5"><svg class="size-[15px]" viewBox="0 0 15 15"><ellipse cx="7.500" cy="6.500" rx="7.500" ry="6" fill="#636363"/><path d="M8 11l5 4-1-6z" fill="#636363"/><path d="M3 6.500h2M6.500 6.500h2M10 6.500h2" stroke="#fff" stroke-width="1.500"/></svg></button>
  </div>
</footer>

<nav aria-label="Taskbar" class="flex h-10 shrink-0 bg-[#080808] text-[12px] text-white [&>button]:flex [&>button]:h-full [&>button]:items-center [&>button]:justify-center">
  <button aria-label="Start" class="w-12"><svg class="size-4" viewBox="0 0 16 16"><path d="M0 2.500L7 1.500v6H0zM8 1.300L16 0v7.500H8zM0 8.500h7v6l-7-1zM8 8.500h8V16l-8-1.300z" fill="#fff"/></svg></button>
  <button aria-label="Search" class="mr-[2px] w-12"><svg class="size-4" viewBox="0 0 16 16" fill="none" stroke="#fff" stroke-width="1.300"><circle cx="10.500" cy="5.500" r="4.800"/><path d="M7 9l-7 7"/></svg></button>
  <button aria-label="Sticky Notes" class="w-[49px]"><svg class="size-[18px]" viewBox="0 0 18 18"><path d="M0 0h18v9l-9 9H0z" fill="#ffe400"/><path d="M10 10h8l-8 8z" fill="#111" stroke="#ffe400"/></svg></button>
  <button aria-label="Edge" class="w-[49px]"><svg class="size-[22px]" viewBox="0 0 22 22"><path d="M1 10Q3 1 12 1q9 0 9 10v2H8q1 5 6 5 3 0 6-2v4q-4 2-8 2-9 0-9-9 0-5 6-8-2 2-2 5h8q0-4-4-4-6 0-11 4z" fill="#0b7cdb"/></svg></button>
  <button aria-label="File Explorer" class="w-[49px] bg-[linear-gradient(#76b9ed,#76b9ed)] bg-[length:40px_2px] bg-bottom bg-no-repeat"><svg class="size-[22px]" viewBox="0 0 22 22"><path d="M0 2h8l2 2h12v16H0z" fill="#f5cf72"/><path d="M1 6h21v13H1z" fill="#ffe596"/><path d="M4 20v-8h14v8h-4v-4H8v4z" fill="#39a0d8"/></svg></button>
  <button aria-label="Store" class="w-[49px]"><svg class="size-6" viewBox="0 0 24 24"><path d="M8 7V4q0-3 4-3t4 3v3" fill="none" stroke="#fff" stroke-width="1.300"/><path d="M1 6h22v15q0 2-2 2H3q-2 0-2-2z" fill="#fff"/><path d="M6 9h5v5H6z" fill="#f25022"/><path d="M12.500 9h5v5h-5z" fill="#7fba00"/><path d="M6 15h5v5H6z" fill="#00a4ef"/><path d="M12.500 15h5v5h-5z" fill="#ffb900"/></svg></button>
  <button aria-label="Infinity" class="w-[49px]"><svg class="h-4 w-6" viewBox="0 0 24 16" fill="none" stroke-width="2.600"><path d="M12 9Q10 13 7 13 2 13 2 8t5-5q3 0 5 4" stroke="#3597ad"/><path d="M11 5q4 7 8 6.500 3-.5 3-4T19 4q-3 0-7 5" stroke="#7fc88d"/></svg></button>
  <button aria-label="Mail" class="w-[49px]"><svg class="size-6" viewBox="0 0 24 24"><path d="M0 8l12-6 12 6v13H0z" fill="#fff"/><path d="M2 9h20l-7 4 3 4-6-4z" fill="#111"/></svg></button>
  <button aria-label="Dropbox" class="w-[49px]"><svg class="size-6" viewBox="0 0 24 24"><rect width="24" height="24" rx="3" fill="#fff"/><use href="#dropbox" x="4.500" y="5" width="15" height="14" fill="#0a62f5"/></svg></button>
  <button aria-label="Notepad++" class="w-[49px]"><svg class="size-6" viewBox="0 0 24 24"><path d="M2 1h18v22H2z" fill="#f4f4f4" stroke="#999"/><path d="M3 12h16v10H3z" fill="#76c043"/><path d="M5 16h12M5 19h12" stroke="#d6f0b8"/><path d="M7 14V6h3v8M12 10h2M15 10h2" stroke="#222" fill="none"/><path d="M14 17l7-14 2 1-7 14z" fill="#f0a92c" stroke="#9b6510" stroke-width=".6"/></svg></button>
  <button aria-label="Chrome" class="w-[49px] bg-[linear-gradient(#76b9ed,#76b9ed)] bg-[length:40px_2px] bg-bottom bg-no-repeat"><svg class="size-[22px]" viewBox="0 0 22 22"><circle cx="11" cy="11" r="11" fill="#fbc116"/><path d="M11 6h9.800A11 11 0 0 0 1.500 5.500L7 13z" fill="#e33b2e"/><path d="M1.500 5.500A11 11 0 0 0 10 22l5-8H7z" fill="#2a9d4c"/><circle cx="11" cy="11" r="5" fill="#fff"/><circle cx="11" cy="11" r="4" fill="#4285f4"/></svg></button>
  <button aria-label="Git" class="w-[49px] bg-[linear-gradient(90deg,#76b9ed_31px,#4d7ba0_31px)] bg-[length:40px_2px] bg-bottom bg-no-repeat"><svg class="size-6" viewBox="0 0 24 24"><path d="M12 0l6 6-6 6-6-6z" fill="#f0505a"/><path d="M18 6l6 6-6 6-6-6z" fill="#7cc34c"/><path d="M12 12l6 6-6 6-6-6z" fill="#fbdd6a"/><path d="M6 6l6 6-6 6-6-6z" fill="#7db1f2"/><path d="M8 3l4 5v9M12 8l5 5" stroke="#222" stroke-width="1.800" fill="none"/><circle cx="12" cy="8" r="2" fill="#222"/><circle cx="12" cy="17" r="2" fill="#222"/><circle cx="17" cy="13" r="2" fill="#222"/></svg></button>
  <button aria-label="Command Prompt" class="w-[49px] bg-[linear-gradient(#76b9ed,#76b9ed)] bg-[length:40px_2px] bg-bottom bg-no-repeat"><svg class="h-[19px] w-[23px]" viewBox="0 0 23 19"><rect x=".5" y=".5" width="22" height="18" fill="#000" stroke="#aaa"/><path d="M1 1h21v2H1z" fill="#bbb"/><path d="M1 4h21v6L1 13z" fill="#2a2a2a"/><path d="M6 5.500H3.500v3H6M8 6v.8M8 8v.8M10 5l3 4M14 9h5" stroke="#ddd" fill="none"/></svg></button>
  <button aria-label="QGIS" class="w-12 border-b-2 border-[#76b9ed] bg-[#3b3b3b]"><svg class="mt-[2px] size-6"><use href="#q"/></svg></button>
  <button aria-label="People" class="ml-auto w-[46px]"><svg class="h-4 w-[18px]" viewBox="0 0 18 16" fill="none" stroke="#fff" stroke-width="1.200"><circle cx="11.500" cy="3.500" r="2.700"/><path d="M9 8q5-3 6.500 3"/><circle cx="6" cy="8" r="2.700"/><path d="M2 15q1-4 4-4t4 4"/></svg></button>
  <button aria-label="Show hidden icons" class="w-6"><svg class="h-2 w-3" viewBox="0 0 12 8"><path d="M1 6.500l5-5 5 5" fill="none" stroke="#fff" stroke-width="1.300"/></svg></button>
  <button aria-label="Battery" class="w-6"><svg class="h-[9px] w-4" viewBox="0 0 16 9"><path d="M.5.500h13v8H.5zM15 3v3" fill="none" stroke="#fff" stroke-width="1.200"/><path d="M2 2h6v5H2z" fill="#fff"/></svg></button>
  <button aria-label="Wi-Fi" class="w-6"><svg class="size-[13px]" viewBox="0 0 13 13" fill="none" stroke="#fff"><path d="M1 13Q1 1 13 1" opacity=".5"/><path d="M4 13q0-9 9-9" opacity=".7"/><path d="M7 13q0-6 6-6" stroke-width="1.300"/><circle cx="11.500" cy="11.500" r="1.200" fill="#fff"/></svg></button>
  <button aria-label="Muted" class="w-6"><svg class="h-[13px] w-[15px]" viewBox="0 0 15 13" fill="none" stroke="#fff"><path d="M.5 4.500h2.500l3-3v10l-3-3H.5zM9 4.500l5 5M14 4.500l-5 5"/></svg></button>
  <button aria-label="Dropbox status" class="w-6"><svg class="h-[14px] w-4" fill="#fff"><use href="#dropbox"/></svg></button>
  <button class="w-9 text-[11px]">IND</button>
  <button class="w-[72px] flex-col text-[11px]"><time>00.30</time><time>22/10/2019</time></button>
  <button aria-label="Notifications" class="mr-[5px] w-[38px]"><svg class="size-4" viewBox="0 0 16 16"><path d="M.6.6h14.800v11.800H10l-3 3v-3H.6z" fill="none" stroke="#fff" stroke-width="1.200"/></svg></button>
  <span class="mr-[3px] ml-[5px] w-px bg-[#555]"></span>
</nav>

<div role="tooltip" class="absolute top-[623px] left-[216px] w-[132px] border border-black bg-[#ffffdc] px-[3px] pt-[2px] pb-px text-[11px] leading-[15px] shadow-[3px_3px_3px_rgba(0,0,0,0.45)]"><b>soal5</b> (MultiLineString -<br>EPSG:4326)<br><i>C:/Users/Muhammad<br>iqbal/Documents/<br>teteteet/soal5.shp</i></div>
</body>
</html>
